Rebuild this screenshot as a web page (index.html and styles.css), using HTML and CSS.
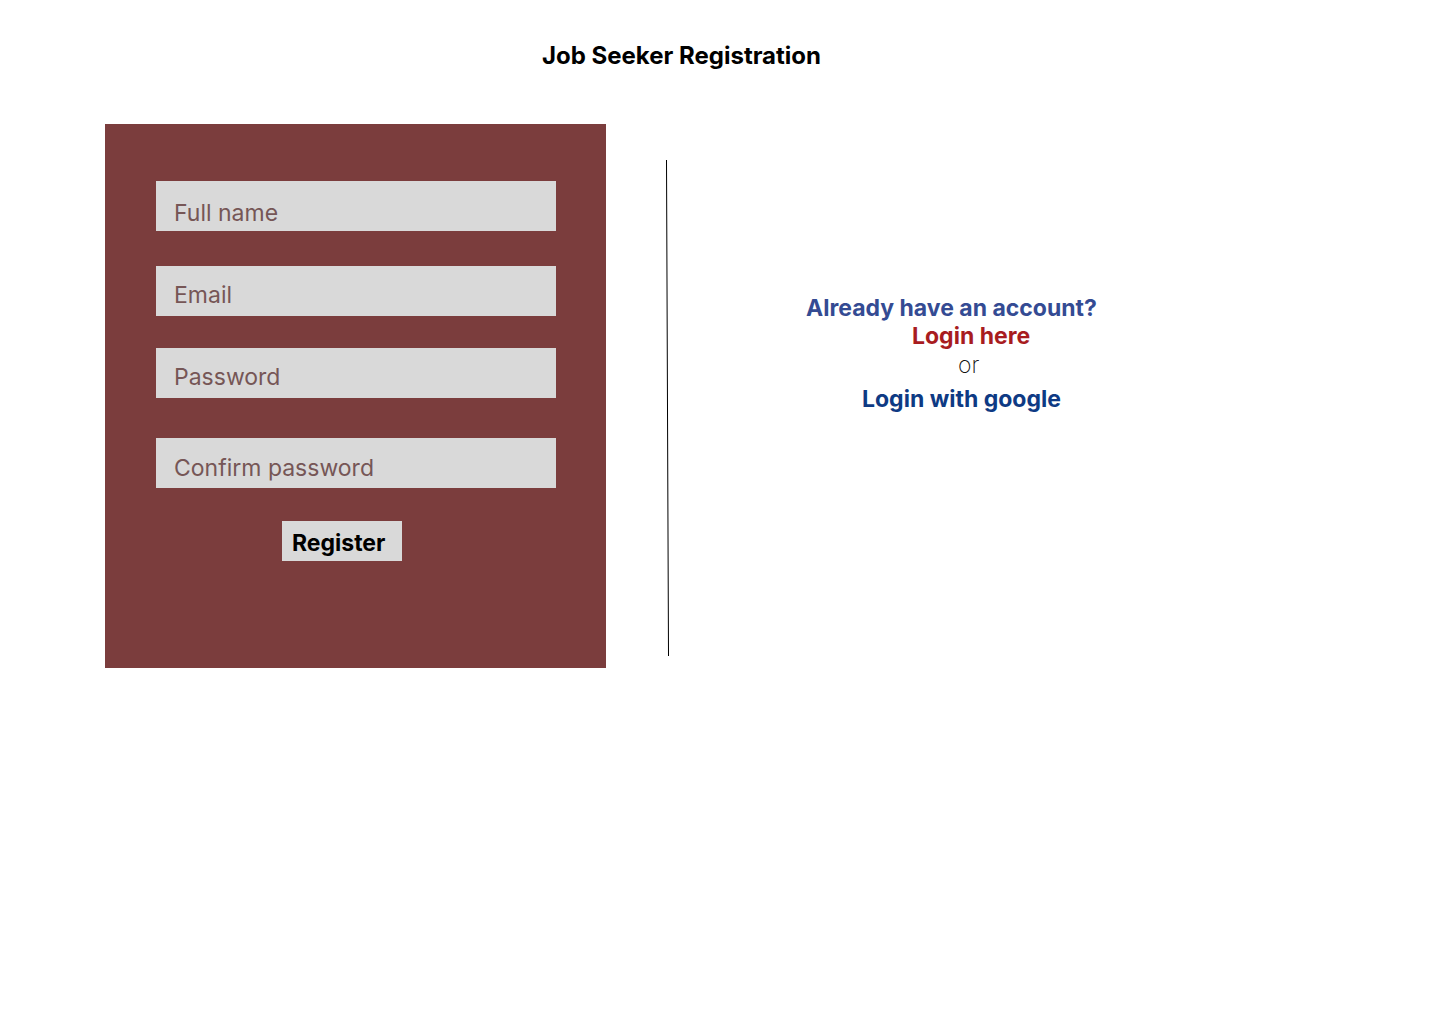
FILE: index.html
```html
<!DOCTYPE html>
<html lang="en">
<head>
<meta charset="utf-8">
<title>Job Seeker Registration</title>
<link rel="stylesheet" href="styles.css">
</head>
<body>
  <header class="page-header">
    <h1 class="page-title">Job Seeker Registration</h1>
  </header>
  <main class="content">
    <form class="reg-panel">
      <div class="field field-name"><span class="placeholder">Full name</span></div>
      <div class="field field-email"><span class="placeholder">Email</span></div>
      <div class="field field-password"><span class="placeholder">Password</span></div>
      <div class="field field-confirm"><span class="placeholder">Confirm password</span></div>
      <button type="button" class="register-btn">Register</button>
    </form>
    <div class="divider">
      <svg width="4" height="496" viewBox="0 0 4 496"><line x1="0.5" y1="0" x2="2.5" y2="496" stroke="#000" stroke-width="1"/></svg>
    </div>
    <section class="login-links">
      <p class="line already">Already have an account?</p>
      <a class="line login-here">Login here</a>
      <p class="line or">or</p>
      <a class="line login-google">Login with google</a>
    </section>
  </main>
</body>
</html>
```

FILE: styles.css
```css
html, body {
  margin: 0;
  padding: 0;
  background: #ffffff;
}
body {
  font-family: Inter, "Noto Sans", sans-serif;
  color: #000;
}
.page-header {
  padding: 41px 0 0 542px;
}
.page-title {
  margin: 0;
  font-size: 24px;
  font-weight: 700;
  line-height: 29px;
}
.content {
  display: flex;
  align-items: flex-start;
  padding: 54px 0 0 105px;
}
.reg-panel {
  width: 501px;
  height: 544px;
  box-sizing: border-box;
  background: #7b3d3d;
  padding: 57px 0 0 51px;
  margin: 0;
  display: flex;
  flex-direction: column;
  align-items: flex-start;
}
.field {
  width: 400px;
  height: 50px;
  box-sizing: border-box;
  background: #d9d9d9;
  padding: 15px 0 0 18px;
  font-size: 23px;
  line-height: 28px;
  color: #765656;
}
.field-name { padding-top: 18px; }
.field-email { margin-top: 35px; }
.field-password { margin-top: 32px; }
.field-confirm { margin-top: 40px; padding-top: 16px; }
.register-btn {
  margin: 33px 0 0 126px;
  width: 120px;
  height: 40px;
  border: 0;
  border-radius: 0;
  background: #d9d9d9;
  font-family: Inter, "Noto Sans", sans-serif;
  font-size: 23px;
  font-weight: 700;
  color: #000;
  text-align: left;
  padding: 4px 0 0 10px;
  line-height: 27px;
  box-sizing: border-box;
}
.divider {
  margin: 36px 0 0 60px;
  line-height: 0;
}
.divider svg { display: block; }
.login-links {
  margin: 170px 0 0 136px;
  display: flex;
  flex-direction: column;
  align-items: flex-start;
}
.line {
  margin: 0;
  font-size: 23px;
  font-weight: 700;
  line-height: 28px;
}
.already {
  color: #344b93;
}
.login-here {
  margin-left: 106px;
  color: #a81c1f;
}
.or {
  margin-left: 152px;
  font-weight: 200;
  line-height: 30px;
  color: #111;
}
.login-google {
  margin-left: 56px;
  line-height: 38px;
  color: #0e3a84;
}
```
